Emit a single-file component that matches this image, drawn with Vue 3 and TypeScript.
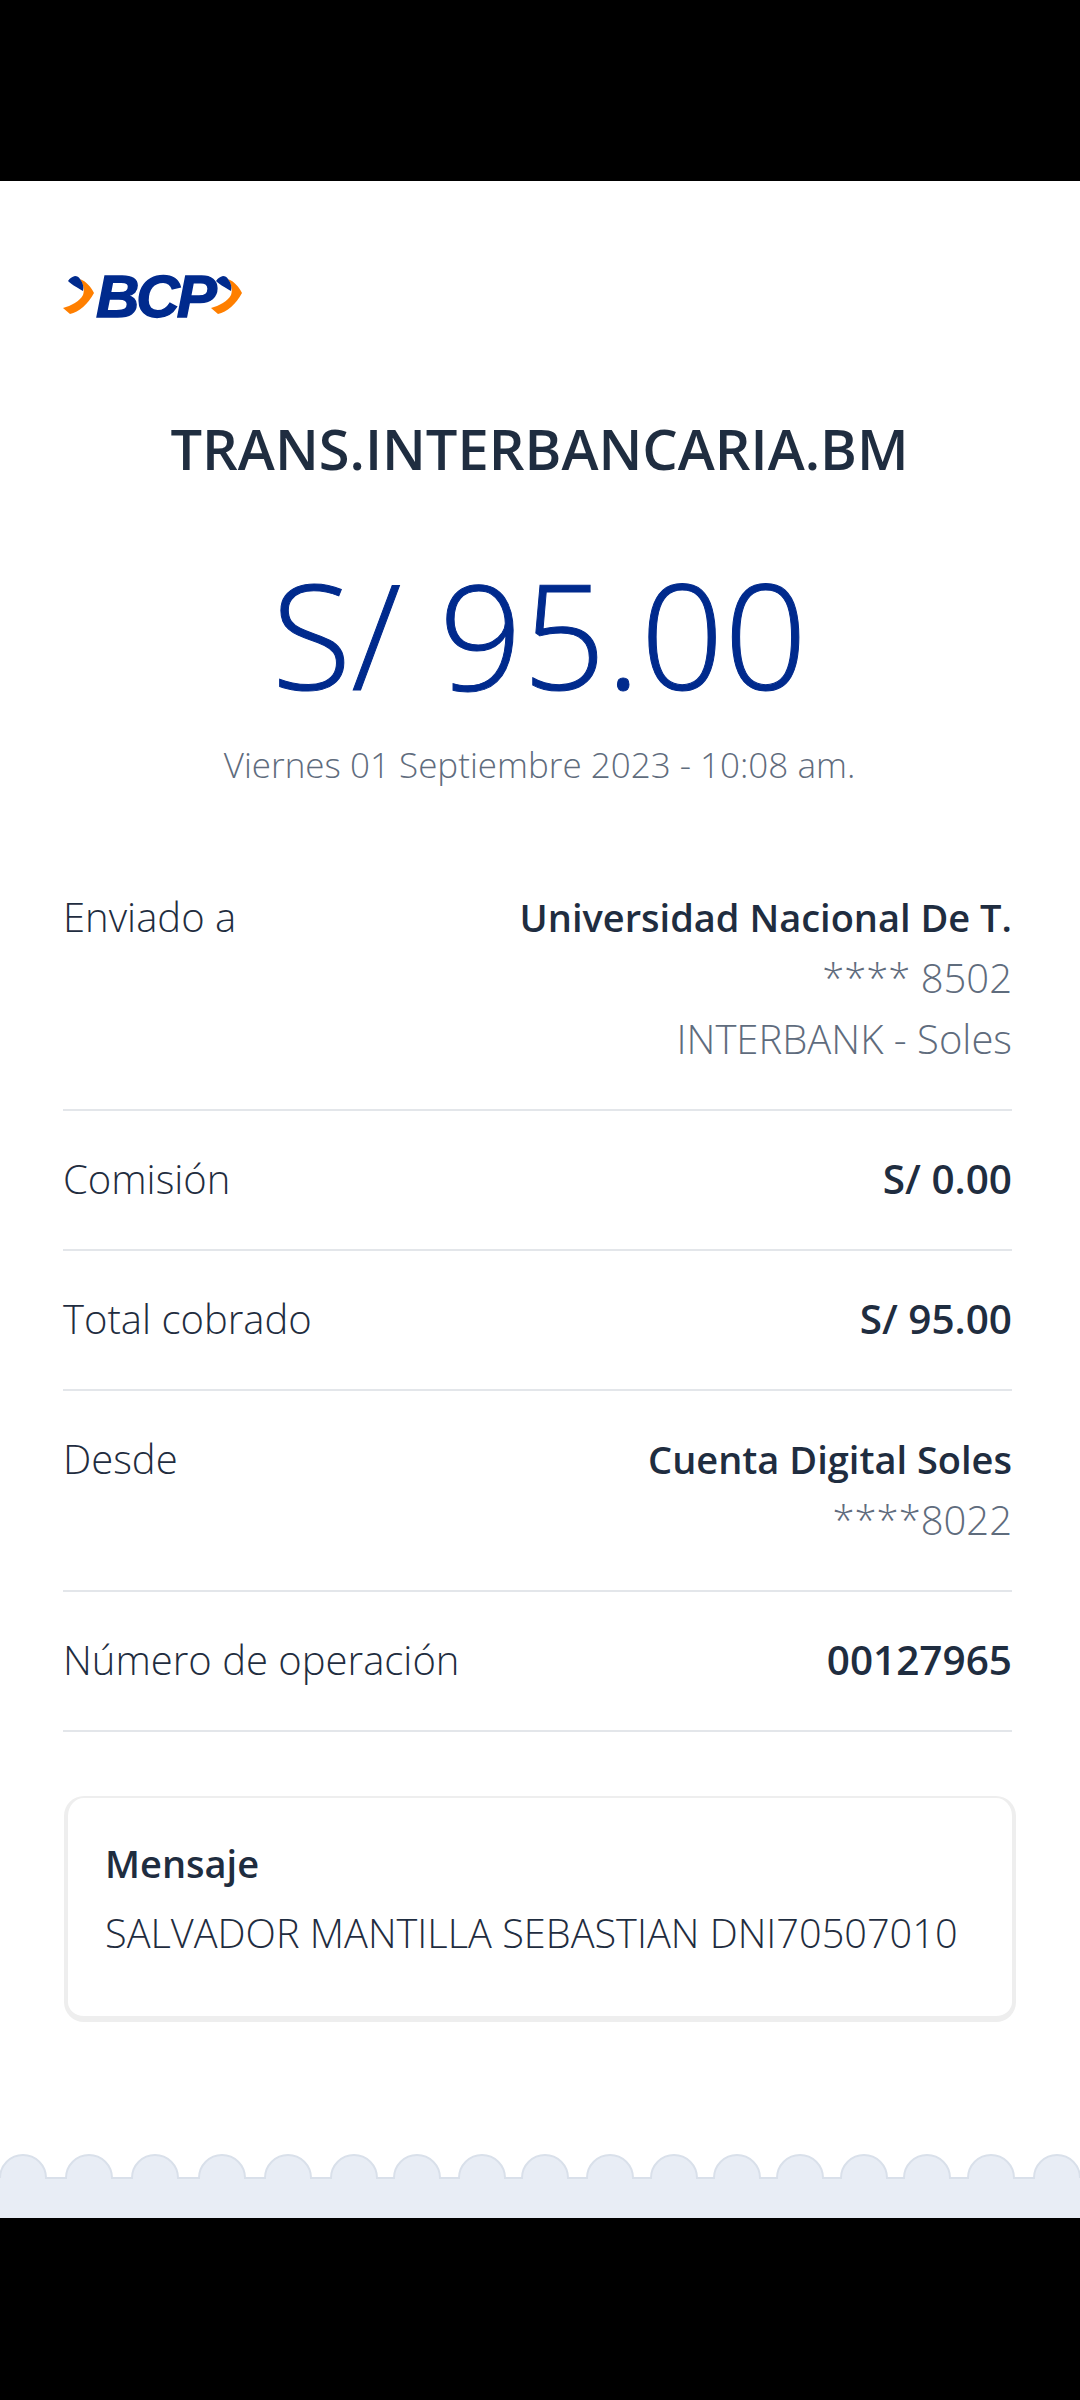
<script setup lang="ts">
interface Row { label: string; main: string; subs?: string[]; num?: boolean }
const rows: Row[] = [
  { label: 'Enviado a', main: 'Universidad Nacional De T.', subs: ['**** 8502', 'INTERBANK - Soles'] },
  { label: 'Comisión', main: 'S/ 0.00', num: true },
  { label: 'Total cobrado', main: 'S/ 95.00', num: true },
  { label: 'Desde', main: 'Cuenta Digital Soles', subs: ['****8022'] },
  { label: 'Número de operación', main: '00127965', num: true },
]
const starts = [0, 66, 132, 199, 265, 331, 394, 459, 522, 587, 651, 714, 777, 841, 904, 968, 1034]
const scallop = 'M0 24 ' + starts.map((s) => `H${s} A23 23 0 0 1 ${s + 46} 24`).join(' ') + ' H1080'
</script>

<template>
  <div class="screen">
    <div class="band top"></div>
    <main class="sheet">
      <svg class="logo" width="180" height="46" viewBox="0 0 180 46">
        <text x="33" y="44" class="logo-text">BCP</text>
        <path d="M0 35 C8 33 17 28 20 22 C22 17 20 11 17 6 C24 9 28 14 31 20 C25 31 16 39 7 41 Z" fill="#ff7f00" />
        <path d="M5 8 C7 5 9 4 12 3 C14 3 16 4 17 6 C20 10 21 14 20 18 C17 16 9 12 5 8 Z" fill="#002a8d" />
        <path d="M148 35 C156 33 165 28 168 22 C170 17 168 11 165 6 C172 9 176 14 179 20 C173 31 164 39 155 41 Z" fill="#ff7f00" />
        <path d="M153 8 C155 5 157 4 160 3 C162 3 164 4 165 6 C168 10 169 14 168 18 C165 16 157 12 153 8 Z" fill="#002a8d" />
      </svg>
      <h1 class="title centered">TRANS.INTERBANCARIA.BM</h1>
      <div class="amount centered">S/ 95.00</div>
      <div class="date centered">Viernes 01 Septiembre 2023 - 10:08 am.</div>
      <section class="rows">
        <div v-for="r in rows" :key="r.label" class="row">
          <div class="label">{{ r.label }}</div>
          <div class="values">
            <div class="main" :class="{ num: r.num }">{{ r.main }}</div>
            <div v-for="s in r.subs" :key="s" class="sub">{{ s }}</div>
          </div>
        </div>
      </section>
      <section class="card">
        <div class="card-title">Mensaje</div>
        <div class="card-text">SALVADOR MANTILLA SEBASTIAN DNI70507010</div>
      </section>
    </main>
    <svg class="scallops" width="1080" height="64" viewBox="0 0 1080 64">
      <path :d="scallop + ' V64 H0 Z'" fill="#e8edf5" />
      <path :d="scallop" fill="none" stroke="#d9e0ea" stroke-width="2" />
    </svg>
    <div class="band bottom"></div>
  </div>
</template>

<style>
html, body { margin: 0; background: #000; }
</style>

<style scoped>
.screen { width: 1080px; height: 2400px; display: flex; flex-direction: column; font-family: "Open Sans", "Noto Sans", sans-serif; background: #fff; overflow: hidden; }
.band { background: #000; }
.top { height: 181px; flex: none; }
.bottom { flex: 1; }
.sheet { height: 1973px; flex: none; box-sizing: border-box; padding: 92px 68px 0 63px; display: flex; flex-direction: column; }
.logo { display: block; overflow: visible; flex: none; }
.logo-text { font-family: "Liberation Sans", sans-serif; font-weight: 700; font-style: italic; font-size: 60px; fill: #002a8d; stroke: #002a8d; stroke-width: 1.5px; letter-spacing: -3px; }
.centered { padding-left: 4px; text-align: center; white-space: nowrap; }
.title { margin: 94px 0 0; font-size: 56px; line-height: 70px; font-weight: 600; color: #1f2d40; }
.amount { margin-top: 66px; font-size: 146px; line-height: 170px; font-weight: 300; color: #002a8d; -webkit-text-stroke: 1px #002a8d; }
.date { margin-top: 23px; font-size: 35px; line-height: 46px; color: #5f6c7d; font-weight: 300; }
.rows { margin-top: 99px; }
.row { display: flex; justify-content: space-between; padding: 0 0 40px; margin-bottom: 38px; border-bottom: 2px solid #e3e6ea; }
.label { font-size: 40px; line-height: 60px; font-weight: 300; color: #1f2d40; }
.values { text-align: right; }
.main { font-size: 38px; line-height: 60px; font-weight: 600; color: #1f2d40; }
.main.num { font-size: 40.5px; }
.sub { font-size: 40px; line-height: 61px; font-weight: 300; color: #5f6c7d; }
.card { margin: 26px -4px 0 1px; height: 226px; flex: none; box-sizing: border-box; padding: 40px 37px 0; border: 2px solid #eeeeee; border-bottom-width: 6px; border-left-width: 4px; border-right-width: 4px; border-radius: 20px; }
.card-title { font-size: 38px; line-height: 50px; font-weight: 600; color: #1f2d40; }
.card-text { margin-top: 20px; font-size: 39.7px; line-height: 50px; font-weight: 300; color: #1f2d40; white-space: nowrap; }
.scallops { display: block; flex: none; }
</style>
